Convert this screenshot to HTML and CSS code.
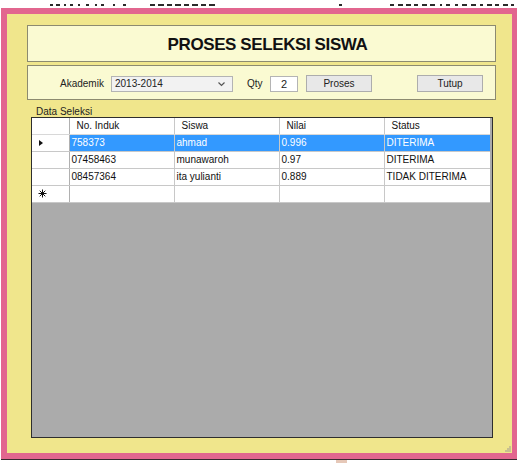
FILE: index.html
```html
<!DOCTYPE html>
<html lang="id">
<head>
    <meta charset="UTF-8">
    <title>Proses Seleksi Siswa</title>
    <link rel="stylesheet" href="styles.css">
</head>
<body>

    <!-- glyph bottoms of the caption line above the screenshot -->
    <div class="cut-line">
        <svg width="525" height="8" viewBox="0 0 525 8">
            <g fill="#2a2a2a">
                <rect x="50" y="4" width="3" height="2"/><rect x="56" y="4" width="4" height="2"/>
                <rect x="64" y="4" width="2" height="2"/><rect x="70" y="4" width="3" height="2"/>
                <rect x="78" y="4" width="2" height="2"/><rect x="86" y="4" width="3" height="2"/>
                <rect x="95" y="4" width="2" height="2"/><rect x="101" y="4" width="3" height="2"/>
                <rect x="113" y="4" width="2" height="2"/><rect x="123" y="4" width="3" height="2"/>
                <rect x="150" y="4" width="5" height="2"/><rect x="158" y="4" width="6" height="2"/>
                <rect x="167" y="4" width="5" height="2"/><rect x="175" y="4" width="6" height="2"/>
                <rect x="184" y="4" width="5" height="2"/><rect x="192" y="4" width="6" height="2"/>
                <rect x="201" y="4" width="5" height="2"/><rect x="209" y="4" width="6" height="2"/>
                <rect x="339" y="4" width="3" height="2"/>
                <rect x="390" y="4" width="4" height="2"/><rect x="398" y="4" width="5" height="2"/>
                <rect x="406" y="4" width="5" height="2"/><rect x="414" y="4" width="4" height="2"/>
                <rect x="422" y="4" width="5" height="2"/><rect x="430" y="4" width="5" height="2"/>
                <rect x="440" y="4" width="2" height="2"/><rect x="446" y="4" width="4" height="2"/>
                <rect x="455" y="4" width="3" height="2"/><rect x="462" y="4" width="5" height="2"/>
                <rect x="471" y="4" width="5" height="2"/><rect x="480" y="4" width="3" height="2"/>
                <rect x="487" y="4" width="5" height="2"/><rect x="495" y="4" width="4" height="2"/>
                <rect x="503" y="4" width="5" height="2"/><rect x="511" y="4" width="3" height="2"/>
            </g>
        </svg>
    </div>

    <div class="window">
        <div class="client">
            <div class="title-panel">
                <h1>PROSES SELEKSI SISWA</h1>
            </div>

            <div class="tool-panel">
                <span class="lbl">Akademik</span>
                <div class="combo">
                    <span>2013-2014</span>
                    <svg width="9" height="6" viewBox="0 0 9 6"><path d="M1.5 1.5 L4.5 4.5 L7.5 1.5" fill="none" stroke="#555" stroke-width="1.2"/></svg>
                </div>
                <span class="lbl qty-lbl">Qty</span>
                <div class="textbox">2</div>
                <button class="btn">Proses</button>
                <button class="btn btn-close">Tutup</button>
            </div>

            <div class="group-label">Data Seleksi</div>

            <div class="grid">
                <table>
                    <tr class="head">
                        <th class="rh"></th>
                        <th>No. Induk</th>
                        <th>Siswa</th>
                        <th>Nilai</th>
                        <th>Status</th>
                    </tr>
                    <tr class="selected">
                        <td class="rh"><span class="arrow"></span></td>
                        <td>758373</td>
                        <td>ahmad</td>
                        <td>0.996</td>
                        <td>DITERIMA</td>
                    </tr>
                    <tr>
                        <td class="rh"></td>
                        <td>07458463</td>
                        <td>munawaroh</td>
                        <td>0.97</td>
                        <td>DITERIMA</td>
                    </tr>
                    <tr>
                        <td class="rh"></td>
                        <td>08457364</td>
                        <td>ita yulianti</td>
                        <td>0.889</td>
                        <td>TIDAK DITERIMA</td>
                    </tr>
                    <tr>
                        <td class="rh">
                            <svg class="star" width="9" height="9" viewBox="0 0 9 9">
                                <path d="M4.5 0.5 V8.5 M0.5 4.5 H8.5 M1.7 1.7 L7.3 7.3 M7.3 1.7 L1.7 7.3" stroke="#111" stroke-width="1"/>
                            </svg>
                        </td>
                        <td></td>
                        <td></td>
                        <td></td>
                        <td></td>
                    </tr>
                </table>
            </div>
        </div>
        <div class="grip">
            <svg width="6" height="6" viewBox="0 0 6 6">
                <rect x="4" y="0" width="2" height="2" fill="#c8c090"/>
                <rect x="2" y="2" width="2" height="2" fill="#c8c090"/>
                <rect x="4" y="2" width="2" height="2" fill="#c8c090"/>
                <rect x="0" y="4" width="2" height="2" fill="#c8c090"/>
                <rect x="2" y="4" width="2" height="2" fill="#c8c090"/>
                <rect x="4" y="4" width="2" height="2" fill="#c8c090"/>
            </svg>
        </div>
    </div>
    <div class="tab-stub"></div>

</body>
</html>
```

FILE: styles.css
```css
body {
    margin: 0;
    background-color: #ffffff;
    font-family: "Liberation Sans", Arial, sans-serif;
    width: 525px;
    height: 472px;
    overflow: hidden;
}
.cut-line {
    height: 8px;
    line-height: 0;
}
.window {
    position: relative;
    margin-left: 1px;
    width: 505px;
    height: 439px;
    background-color: #e2668f;
    padding: 6px 5px 6px 6px;
    border-bottom: 1px solid #3a2a30;
}
.client {
    height: 439px;
    background-color: #f0e68c;
    padding: 11px 0 0 20px;
    box-sizing: border-box;
}
.title-panel {
    width: 469px;
    height: 37px;
    box-sizing: border-box;
    background-color: #fafad2;
    border: 1px solid #8c8a70;
    display: flex;
    align-items: center;
    justify-content: center;
    padding: 3px 0 0 12px;
}
h1 {
    margin: 0;
    font-size: 17px;
    letter-spacing: -0.4px;
    font-weight: bold;
    color: #111;
}
.tool-panel {
    width: 469px;
    height: 35px;
    margin-top: 3px;
    box-sizing: border-box;
    background-color: #fafad2;
    border: 1px solid #8c8a70;
    display: flex;
    align-items: center;
    padding: 2px 0 0 32px;
    font-size: 10px;
    color: #222;
}
.lbl {
    width: 51px;
}
.combo {
    width: 122px;
    height: 16px;
    box-sizing: border-box;
    border: 1px solid #b4b4b4;
    background-color: #f2f2f2;
    display: flex;
    align-items: center;
    justify-content: space-between;
    padding: 0 6px 0 3px;
}
.qty-lbl {
    width: 23px;
    margin-left: 14px;
}
.textbox {
    width: 28px;
    height: 16px;
    box-sizing: border-box;
    border: 1px solid #b4b4b4;
    background-color: #ffffff;
    text-align: center;
    line-height: 14px;
    font-size: 11px;
}
.btn {
    width: 66px;
    height: 17px;
    margin-left: 8px;
    box-sizing: border-box;
    border: 1px solid #adadad;
    background-color: #e8e8e8;
    font-family: "Liberation Sans", Arial, sans-serif;
    font-size: 10px;
    color: #222;
    padding: 0;
}
.btn-close {
    margin-left: 45px;
}
.group-label {
    font-size: 10px;
    color: #222;
    margin: 6px 0 0 9px;
    height: 11px;
    line-height: 11px;
}
.grid {
    width: 462px;
    height: 321px;
    margin-left: 4px;
    box-sizing: border-box;
    border: 1px solid #2e2e2e;
    background-color: #ababab;
}
table {
    border-collapse: collapse;
    font-size: 10px;
    color: #111;
    table-layout: fixed;
}
th, td {
    width: 105px;
    height: 17px;
    padding: 0 0 0 2px;
    text-align: left;
    font-weight: normal;
    background-color: #ffffff;
    border-right: 1px solid #c8c8c8;
    border-bottom: 1px solid #c8c8c8;
    white-space: nowrap;
    box-sizing: border-box;
}
th {
    padding-left: 7px;
    height: 16px;
    border-bottom-color: #d8d8d8;
}
th:last-child, td:last-child {
    border-right: none;
    width: 106px;
}
.rh {
    width: 37px;
    padding: 0;
    border-right-color: #b0b0b0;
}
.selected td {
    background-color: #3399ff;
    color: #ffffff;
}
.selected td.rh {
    background-color: #ffffff;
}
.arrow {
    display: block;
    margin-left: 7px;
    width: 0;
    height: 0;
    border-top: 3px solid transparent;
    border-bottom: 3px solid transparent;
    border-left: 4px solid #111;
}
.star {
    display: block;
    margin-left: 6px;
}
.grip {
    position: absolute;
    right: 6px;
    bottom: 7px;
    line-height: 0;
}
.tab-stub {
    margin-left: 336px;
    width: 11px;
    height: 3px;
    background-color: #e6c8b8;
}
```
